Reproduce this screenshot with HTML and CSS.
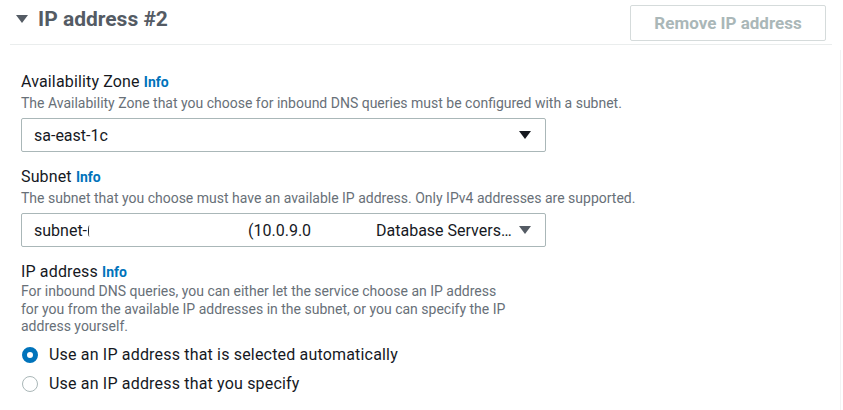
FILE: index.html
```html
<!DOCTYPE html>
<html>
<head>
<meta charset="utf-8">
<link rel="stylesheet" href="styles.css">
</head>
<body>
<div class="page">
  <div class="header">
    <div class="title">
      <svg class="caret" width="12" height="10" viewBox="0 0 12 10"><path d="M0 1 H12 L6 9 Z" fill="#545b64"/></svg>
      <h2>IP address #2</h2>
    </div>
    <button class="remove" disabled>Remove IP address</button>
  </div>
  <div class="body">
    <div class="field">
      <div class="label">Availability Zone <a class="info">Info</a></div>
      <div class="desc">The Availability Zone that you choose for inbound DNS queries must be configured with a subnet.</div>
      <div class="select">
        <span class="value">sa-east-1c</span>
        <svg class="arrow" width="12" height="10" viewBox="0 0 12 10"><path d="M0 1 H12 L6 9 Z" fill="#16191f"/></svg>
      </div>
    </div>
    <div class="field">
      <div class="label">Subnet <a class="info">Info</a></div>
      <div class="desc">The subnet that you choose must have an available IP address. Only IPv4 addresses are supported.</div>
      <div class="select">
        <span class="value sub">subnet-<span class="cut"></span></span>
        <span class="cidr">(10.0.9.0</span>
        <span class="name">Database Servers…</span>
        <svg class="arrow tight" width="12" height="10" viewBox="0 0 12 10"><path d="M0 1 H12 L6 9 Z" fill="#545b64"/></svg>
      </div>
    </div>
    <div class="field">
      <div class="label">IP address <a class="info">Info</a></div>
      <div class="desc wrap">For inbound DNS queries, you can either let the service choose an IP address for you from the available IP addresses in the subnet, or you can specify the IP address yourself.</div>
      <div class="radios">
        <label class="radio"><span class="dot on"></span>Use an IP address that is selected automatically</label>
        <label class="radio"><span class="dot"></span>Use an IP address that you specify</label>
      </div>
    </div>
  </div>
</div>
<div class="edge"></div>
</body>
</html>
```
FILE: styles.css
```css
* { box-sizing: border-box; }
html, body { margin: 0; padding: 0; background: #fff; }
body {
  font-family: Roboto, "Liberation Sans", Arial, sans-serif;
  color: #16191f;
  width: 843px;
  height: 410px;
  overflow: hidden;
  position: relative;
}
.page { padding: 0 11px 0 10px; width: 843px; }
.header {
  display: flex;
  justify-content: space-between;
  align-items: flex-start;
  height: 45px;
  border-bottom: 1px solid #eaeded;
  padding: 0 6px 0 6px;
}
.title { display: flex; align-items: center; gap: 10px; margin-top: 6px; }
h2 {
  margin: 0;
  font-size: 21px;
  line-height: 26px;
  font-weight: 700;
  color: #545b64;
}
.remove {
  font-family: inherit;
  font-size: 17px;
  font-weight: 700;
  color: #aab7b8;
  background: #fff;
  border: 1px solid #d5dbdb;
  border-radius: 2px;
  width: 196px;
  height: 36px;
  margin-top: 5px;
  padding: 0;
}
.body { padding: 27px 0 0 11px; display: flex; flex-direction: column; gap: 15px; }
.label { font-size: 16px; line-height: 20px; letter-spacing: 0.15px; }
.info { font-size: 14px; font-weight: 700; color: #0073bb; letter-spacing: 0; }
.desc { font-size: 14px; color: #687078; line-height: 18px; margin-top: 2px; }
.desc.wrap { width: 490px; line-height: 17.5px; margin-top: 1px; }
.select {
  margin-top: 6px;
  width: 525px;
  height: 34px;
  border: 1px solid #aab7b8;
  border-radius: 2px;
  display: flex;
  align-items: center;
  padding: 0 14px 0 12px;
  font-size: 16px;
}
.value { flex: 1; }
.value.sub { flex: 0 0 214px; display: flex; align-items: center; }
.cut {
  display: inline-block; width: 3px; height: 12px;
  border-left: 1.6px solid #16191f;
  border-radius: 50% 0 0 50%;
  margin-left: 1px; margin-top: 1px;
}
.cidr { flex: 0 0 128px; }
.name { flex: 1; white-space: nowrap; }
.arrow.tight { margin-left: 2px; }
.radios { display: flex; flex-direction: column; gap: 9px; margin-top: 9px; }
.radio { display: flex; align-items: center; font-size: 16px; gap: 11px; line-height: 20px; padding-left: 1px; letter-spacing: 0.18px; }
.dot {
  width: 16px; height: 16px; border-radius: 50%;
  border: 1.5px solid #aab7b8;
  display: inline-block;
  flex: none;
}
.dot.on { border: 5px solid #0073bb; }
.edge { position: absolute; top: 50px; right: 2px; width: 1px; height: 360px; background: #f2f3f3; }
```
